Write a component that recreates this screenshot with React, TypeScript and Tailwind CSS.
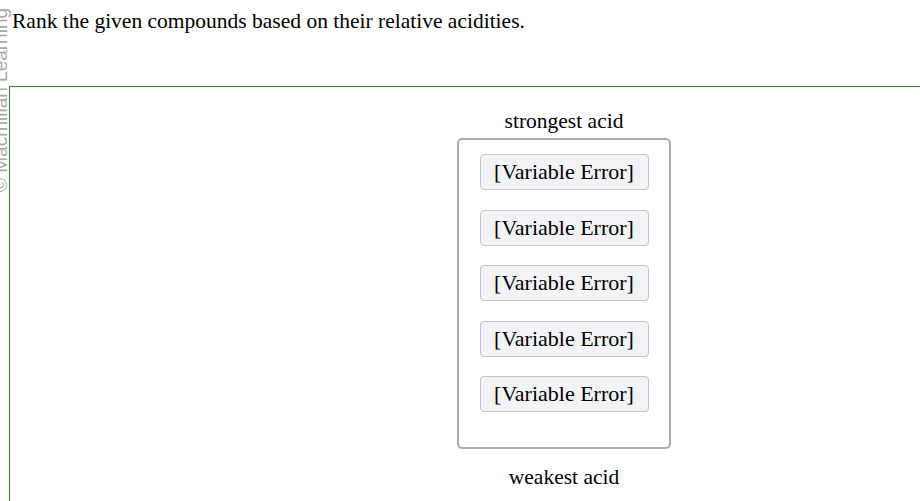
import React from "react";

export default function App() {
  const items = Array.from({ length: 5 });
  return (
    <div className="relative h-[501px] w-[920px] overflow-hidden bg-white" style={{ fontFamily: '"Liberation Serif", serif' }}>
      <div
        className="absolute left-[-9px] top-[192px] origin-top-left -rotate-90 whitespace-nowrap text-[19px] leading-[19px] text-[#a8a8a8]"
        style={{ fontFamily: '"Liberation Sans", sans-serif' }}
      >
        © Macmillan Learning
      </div>
      <div className="pl-[12px] pt-[9px] text-[21.5px] leading-[25px] text-black">
        Rank the given compounds based on their relative acidities.
      </div>
      <div className="ml-[9px] mt-[52px] h-[500px] border-l border-t border-[#3b8a2a]">
        <div className="flex flex-col items-center pl-[198px] pt-[22px]">
          <div className="text-[21.5px] leading-[25px] text-black">strongest acid</div>
          <div className="mt-[4px] flex h-[311px] w-[214px] flex-col items-center gap-[19.5px] rounded-[5px] border-2 border-[#aaaaaa] pt-[14px]">
            {items.map((_, i) => (
              <div
                key={i}
                className="flex h-[36px] w-[169px] shrink-0 items-center justify-center rounded-[4px] border border-[#c4c4c4] bg-[#f2f3f6] text-[22px] leading-[26px] text-black"
              >
                [Variable Error]
              </div>
            ))}
          </div>
          <div className="mt-[16px] text-[21.5px] leading-[25px] text-black">weakest acid</div>
        </div>
      </div>
    </div>
  );
}
